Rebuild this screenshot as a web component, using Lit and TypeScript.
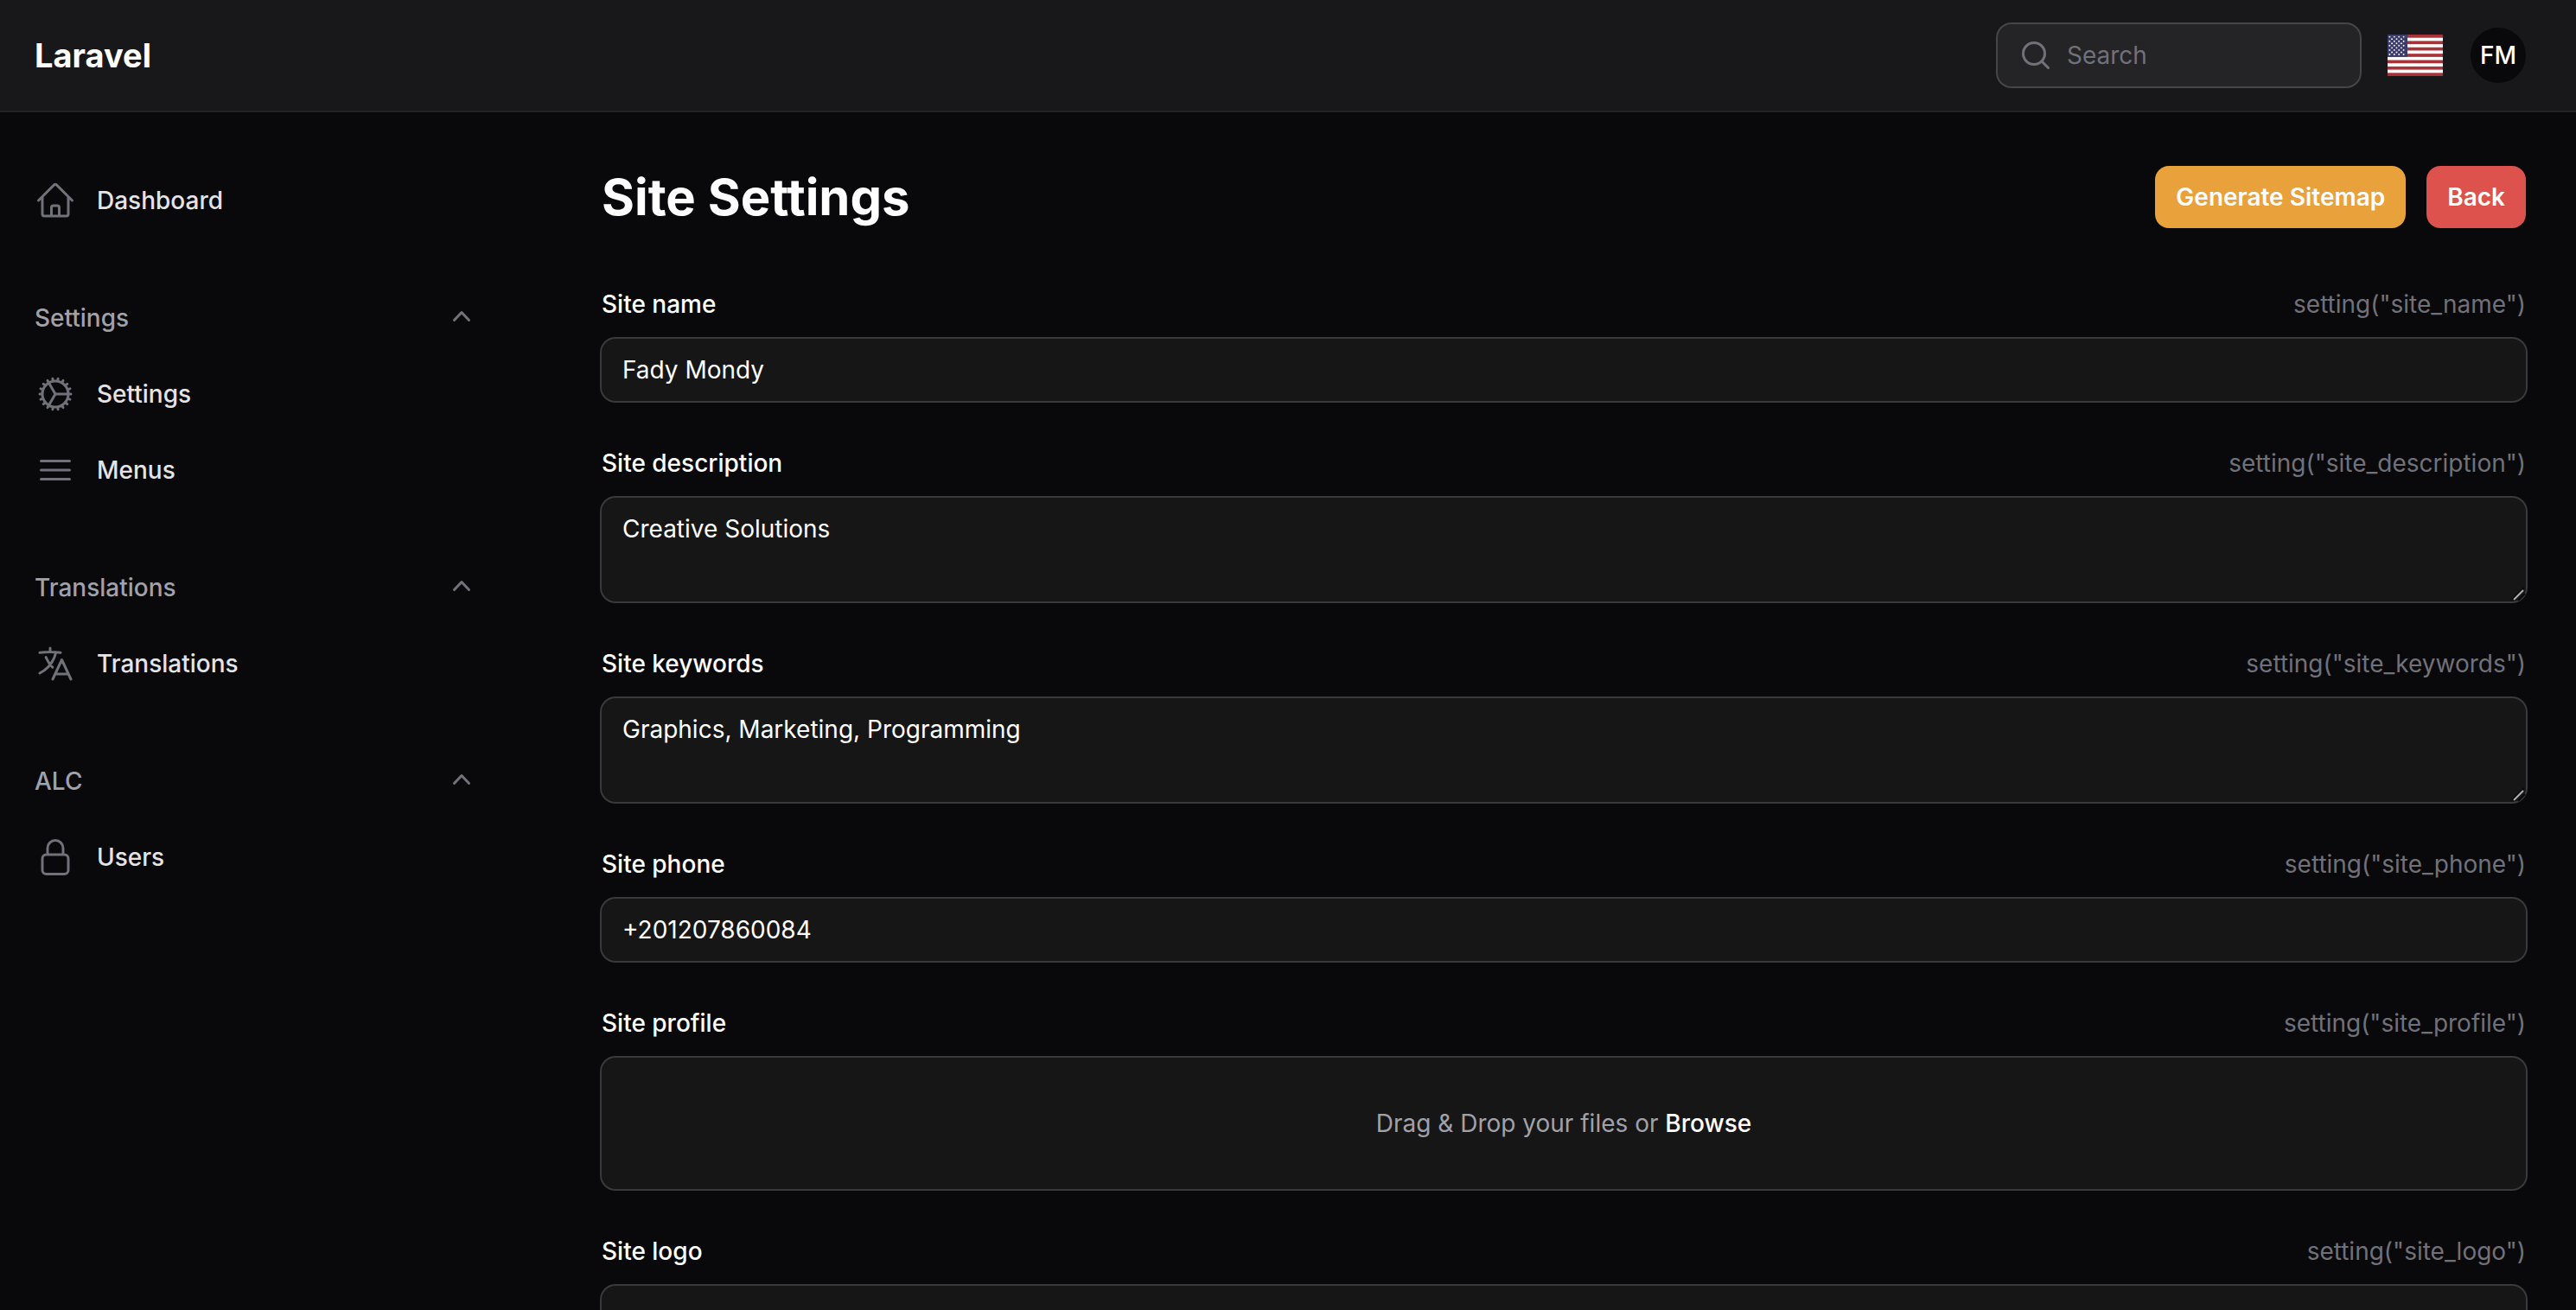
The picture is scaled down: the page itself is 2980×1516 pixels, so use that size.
import { LitElement, html, svg, css, nothing } from "lit";
import { customElement, state } from "lit/decorators.js";

const ICONS: Record<string, string> = {
  home: "M2.25 12l8.954-8.955c.44-.439 1.152-.439 1.591 0L21.75 12M4.5 9.75v10.125c0 .621.504 1.125 1.125 1.125H9.75v-4.875c0-.621.504-1.125 1.125-1.125h2.25c.621 0 1.125.504 1.125 1.125V21h4.125c.621 0 1.125-.504 1.125-1.125V9.75M8.25 21h8.25",
  cog: "M4.5 12a7.5 7.5 0 0015 0m-15 0a7.5 7.5 0 1115 0m-15 0H3m16.5 0H21m-1.5 0H12m-8.457 3.077l1.41-.513m14.095-5.13l1.41-.513M5.106 17.785l1.15-.964m11.49-9.642l1.149-.964M7.501 19.795l.75-1.3m7.5-12.99l.75-1.3m-6.063 16.658l.26-1.477m2.605-14.772l.26-1.477m0 17.726l-.26-1.477M10.698 4.614l-.26-1.477M16.5 19.794l-.75-1.299M7.5 4.205L12 12m6.894 5.785l-1.149-.964M6.256 7.178l-1.15-.964m15.352 8.864l-1.41-.513M4.954 9.435l-1.41-.514M12.002 12l-3.75 6.495",
  bars: "M3.75 6.75h16.5M3.75 12h16.5m-16.5 5.25h16.5",
  language: "M10.5 21l5.25-11.25L21 21m-9-3h7.5M3 5.621a48.474 48.474 0 016-.371m0 0c1.12 0 2.233.038 3.334.114M9 5.25V3m3.334 2.364C11.176 10.658 7.69 15.08 3 17.502m9.334-12.138c.896.061 1.785.147 2.666.257m-4.589 8.495a18.023 18.023 0 01-3.827-5.802",
  lock: "M16.5 10.5V6.75a4.5 4.5 0 10-9 0v3.75m-.75 11.25h10.5a2.25 2.25 0 002.25-2.25v-6.75a2.25 2.25 0 00-2.25-2.25H6.75a2.25 2.25 0 00-2.25 2.25v6.75a2.25 2.25 0 002.25 2.25z",
};

const icon = (name: string) => html`<svg class="icon" viewBox="0 0 24 24" aria-hidden="true"><path d=${ICONS[name]}></path></svg>`;

interface NavGroup {
  label?: string;
  items: { label: string; icon: string }[];
}

const NAV: NavGroup[] = [
  { items: [{ label: "Dashboard", icon: "home" }] },
  { label: "Settings", items: [{ label: "Settings", icon: "cog" }, { label: "Menus", icon: "bars" }] },
  { label: "Translations", items: [{ label: "Translations", icon: "language" }] },
  { label: "ALC", items: [{ label: "Users", icon: "lock" }] },
];

interface Field {
  key: string;
  label: string;
  kind: "text" | "area" | "file";
  value?: string;
  prompt?: boolean;
}

const FIELDS: Field[] = [
  { key: "site_name", label: "Site name", kind: "text", value: "Fady Mondy" },
  { key: "site_description", label: "Site description", kind: "area", value: "Creative Solutions" },
  { key: "site_keywords", label: "Site keywords", kind: "area", value: "Graphics, Marketing, Programming" },
  { key: "site_phone", label: "Site phone", kind: "text", value: "+201207860084" },
  { key: "site_profile", label: "Site profile", kind: "file", prompt: true },
  { key: "site_logo", label: "Site logo", kind: "file" },
];

const base = css`
  :host {
    display: block;
    font-family: Inter, "Liberation Sans", sans-serif;
    font-size: 28px;
    line-height: 48px;
    color: #fff;
  }
  *,
  *::before,
  *::after {
    box-sizing: border-box;
  }
  button,
  input,
  textarea {
    font: inherit;
    color: inherit;
    margin: 0;
    border: 0;
    background: none;
  }
  button {
    cursor: pointer;
  }
  a {
    color: inherit;
    text-decoration: none;
  }
  .icon {
    display: block;
    flex: none;
    width: 48px;
    height: 48px;
    fill: none;
    stroke: #71717a;
    stroke-width: 1.5;
    stroke-linecap: round;
    stroke-linejoin: round;
  }
`;

@customElement("us-flag")
export class UsFlag extends LitElement {
  static styles = css`
    :host,
    .flag {
      display: block;
      width: 64px;
      height: 48px;
    }
  `;

  render() {
    const stars = [];
    for (let row = 0; row < 9; row++) {
      const odd = row % 2;
      for (let col = 0; col < (odd ? 3 : 4); col++) {
        stars.push(svg`<circle cx=${2.4 + col * 5.4 + odd * 2.7} cy=${2.6 + row * 2.55} r="0.95" fill="#fff"></circle>`);
      }
    }
    return html`<svg class="flag" viewBox="0 0 64 48" role="img" aria-label="English">
      <rect width="64" height="48" fill="#fff"></rect>
      ${[0, 1, 2, 3, 4, 5, 6].map((i) => svg`<rect y=${(i * 96) / 13} width="64" height=${48 / 13} fill="#a73338"></rect>`)}
      <rect width="23" height="25.85" fill="#3c3b6e"></rect>
      ${stars}
    </svg>`;
  }
}

@customElement("top-bar")
export class TopBar extends LitElement {
  static styles = [
    base,
    css`
      .bar {
        display: flex;
        align-items: center;
        gap: 32px;
        height: 130px;
        padding: 0 58px 0 40px;
        background: #18181b;
        border-bottom: 2px solid #222224;
      }
      .brand {
        margin-right: auto;
        font-size: 38px;
        font-weight: 700;
      }
      .search {
        display: flex;
        align-items: center;
        gap: 16px;
        width: 419px;
        height: 72px;
        padding: 0 24px;
        border-radius: 16px;
        background: #242426;
        box-shadow: 0 0 0 2px #464649;
      }
      .search .icon {
        width: 40px;
        height: 40px;
      }
      .query {
        flex: 1;
        min-width: 0;
        padding: 0;
        outline: none;
      }
      .query::placeholder {
        color: #71717a;
        opacity: 1;
      }
      .plain {
        padding: 0;
      }
      .avatar {
        width: 64px;
        height: 64px;
        padding: 0;
        border-radius: 50%;
        background: #09090b;
        font-weight: 500;
      }
    `,
  ];

  render() {
    return html`<header class="bar">
      <a class="brand" href="#">Laravel</a>
      <label class="search">
        <svg class="icon" viewBox="0 0 20 20" aria-hidden="true">
          <circle cx="9" cy="9" r="6.25"></circle>
          <path d="M13.42 13.42L17.25 17.25"></path>
        </svg>
        <input class="query" type="search" placeholder="Search" aria-label="Search" />
      </label>
      <button class="plain" type="button" aria-label="Language"><us-flag></us-flag></button>
      <button class="avatar" type="button">FM</button>
    </header>`;
  }
}

@customElement("side-nav")
export class SideNav extends LitElement {
  static styles = [
    base,
    css`
      .nav {
        display: flex;
        flex-direction: column;
        gap: 56px;
        padding: 64px 68px 64px 24px;
        font-weight: 500;
      }
      .group,
      .items {
        display: flex;
        flex-direction: column;
        gap: 8px;
        margin: 0;
        padding: 0;
        list-style: none;
      }
      .head {
        display: flex;
        align-items: center;
        justify-content: space-between;
        padding: 16px;
        color: #a1a1aa;
        font-weight: 500;
        text-align: left;
      }
      .chevron {
        width: 40px;
        height: 40px;
        fill: #71717a;
      }
      .head[aria-expanded="false"] .chevron {
        transform: rotate(180deg);
      }
      .item {
        display: flex;
        align-items: center;
        gap: 24px;
        padding: 16px;
        color: #e4e4e7;
      }
    `,
  ];

  @state() private closed: string[] = [];

  private toggle(label: string) {
    this.closed = this.closed.includes(label) ? this.closed.filter((l) => l !== label) : [...this.closed, label];
  }

  private renderGroup(group: NavGroup) {
    const open = !group.label || !this.closed.includes(group.label);
    return html`<div class="group">
      ${group.label
        ? html`<button class="head" type="button" aria-expanded=${open ? "true" : "false"} @click=${() => this.toggle(group.label!)}>
            ${group.label}
            <svg class="chevron" viewBox="0 1 20 20" aria-hidden="true">
              <path d="M14.77 12.79a.75.75 0 01-1.06-.02L10 8.832 6.29 12.77a.75.75 0 11-1.08-1.04l4.25-4.5a.75.75 0 011.08 0l4.25 4.5a.75.75 0 01-.02 1.06z"></path>
            </svg>
          </button>`
        : nothing}
      ${open
        ? html`<ul class="items">
            ${group.items.map((item) => html`<li><a class="item" href="#">${icon(item.icon)}${item.label}</a></li>`)}
          </ul>`
        : nothing}
    </div>`;
  }

  render() {
    return html`<nav class="nav">${NAV.map((group) => this.renderGroup(group))}</nav>`;
  }
}

@customElement("setting-field")
export class SettingField extends LitElement {
  static properties = { field: { attribute: false } };
  declare field: Field;

  static styles = [
    base,
    css`
      .top {
        display: flex;
        justify-content: space-between;
        margin-bottom: 16px;
      }
      .label {
        font-weight: 500;
      }
      .hint {
        color: #71717a;
      }
      .box {
        display: block;
        width: 100%;
        border-radius: 16px;
        background: #161617;
        box-shadow: 0 0 0 2px #3a3a3c;
        outline: none;
      }
      .text {
        height: 72px;
        padding: 12px 24px;
      }
      .wrap {
        position: relative;
      }
      .area {
        height: 120px;
        padding: 12px 24px;
        resize: none;
        overflow: hidden;
      }
      .grip {
        position: absolute;
        right: 0;
        bottom: 0;
        width: 18px;
        height: 18px;
        pointer-events: none;
      }
      .drop {
        display: flex;
        align-items: center;
        justify-content: center;
        height: 152px;
        color: #a1a1aa;
        white-space: pre;
        cursor: pointer;
      }
      .browse {
        color: #fff;
        font-weight: 500;
      }
    `,
  ];

  private renderControl() {
    const { key, kind, value = "", prompt } = this.field;
    if (kind === "area") {
      return html`<div class="wrap">
        <textarea class="box area" id=${key} .value=${value}></textarea>
        <svg class="grip" viewBox="0 0 18 18" aria-hidden="true">
          <path d="M2 16L16 2M9 17L17 9" fill="none" stroke="#09090b" stroke-width="2"></path>
          <path d="M4 16L15 5" fill="none" stroke="#b0b0b0" stroke-width="2"></path>
        </svg>
      </div>`;
    }
    if (kind === "file") {
      return html`<label class="box drop"
        >${prompt ? html`Drag &amp; Drop your files or <span class="browse">Browse</span>` : nothing}<input id=${key} type="file" hidden
      /></label>`;
    }
    return html`<input class="box text" id=${key} type="text" .value=${value} />`;
  }

  render() {
    return html`<div class="top">
        <label class="label" for=${this.field.key}>${this.field.label}</label>
        <span class="hint">setting("${this.field.key}")</span>
      </div>
      ${this.renderControl()}`;
  }
}

@customElement("app-root")
export class AppRoot extends LitElement {
  static styles = [
    base,
    css`
      :host {
        display: flex;
        flex-direction: column;
        height: 100vh;
        overflow: hidden;
        background: #09090b;
      }
      .layout {
        display: grid;
        grid-template-columns: 638px 1fr;
        flex: 1;
        min-height: 0;
      }
      .main {
        display: flex;
        flex-direction: column;
        gap: 64px;
        min-width: 0;
        padding: 62px 58px 64px;
        overflow-y: auto;
        scrollbar-width: none;
      }
      .side {
        margin-top: -2px;
      }
      .head {
        display: flex;
        align-items: center;
        gap: 24px;
      }
      .title {
        margin: 0 auto 0 0;
        font-size: 58px;
        line-height: 72px;
        font-weight: 700;
      }
      .btn {
        height: 72px;
        padding: 0 24px;
        border-radius: 16px;
        font-weight: 600;
      }
      .warning {
        background: #e9a23b;
      }
      .danger {
        background: #dd524c;
      }
      .form {
        display: flex;
        flex-direction: column;
        gap: 48px;
      }
    `,
  ];

  render() {
    return html`<top-bar></top-bar>
      <div class="layout">
        <side-nav class="side"></side-nav>
        <main class="main">
          <div class="head">
            <h1 class="title">Site Settings</h1>
            <button class="btn warning" type="button">Generate Sitemap</button>
            <button class="btn danger" type="button">Back</button>
          </div>
          <form class="form">${FIELDS.map((field) => html`<setting-field .field=${field}></setting-field>`)}</form>
        </main>
      </div>`;
  }
}
